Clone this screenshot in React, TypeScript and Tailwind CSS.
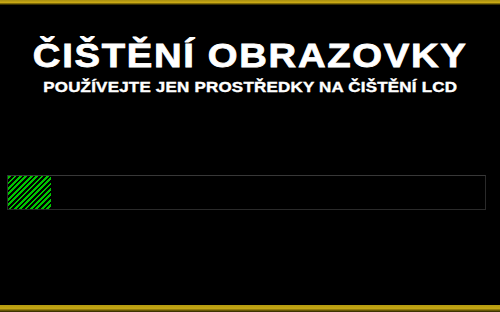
import React from 'react';

const progress = 9; // procent

export default function App() {
  return (
    <div className="w-[500px] h-[312px] bg-black flex flex-col overflow-hidden" style={{ fontFamily: '"Liberation Sans", Arial, sans-serif' }}>
      <div className="h-[5px] bg-gradient-to-b from-[#a88f10] via-[#c9a915] to-[#1c1800]" />
      <div className="flex-1 flex flex-col items-center">
        <h1 className="mt-[30px] text-white font-bold text-[34px] leading-[40px] tracking-[1.5px] scale-x-[1.125] [-webkit-text-stroke:0.8px_white]">
          ČIŠTĚNÍ OBRAZOVKY
        </h1>
        <p className="mt-[3px] text-white font-bold text-[15px] leading-[18px] tracking-[0.2px] scale-x-[1.13] [-webkit-text-stroke:0.4px_white]">
          POUŽÍVEJTE JEN PROSTŘEDKY NA ČIŠTĚNÍ LCD
        </p>
        <div className="mt-[79px] self-start ml-[7px] w-[479px] h-[35px] border border-[#2a2a2a] border-t-[#383838] bg-black">
          <div
            className="h-full"
            style={{
              width: `${progress}%`,
              backgroundImage:
                'repeating-linear-gradient(-45deg, #000 0px, #000 1.8px, #00c400 1.8px, #00c400 3.8px)',
            }}
          />
        </div>
      </div>
      <div className="h-[7px] bg-gradient-to-b from-[#b39a10] via-[#c4a614] to-[#2a2400]" />
    </div>
  );
}
